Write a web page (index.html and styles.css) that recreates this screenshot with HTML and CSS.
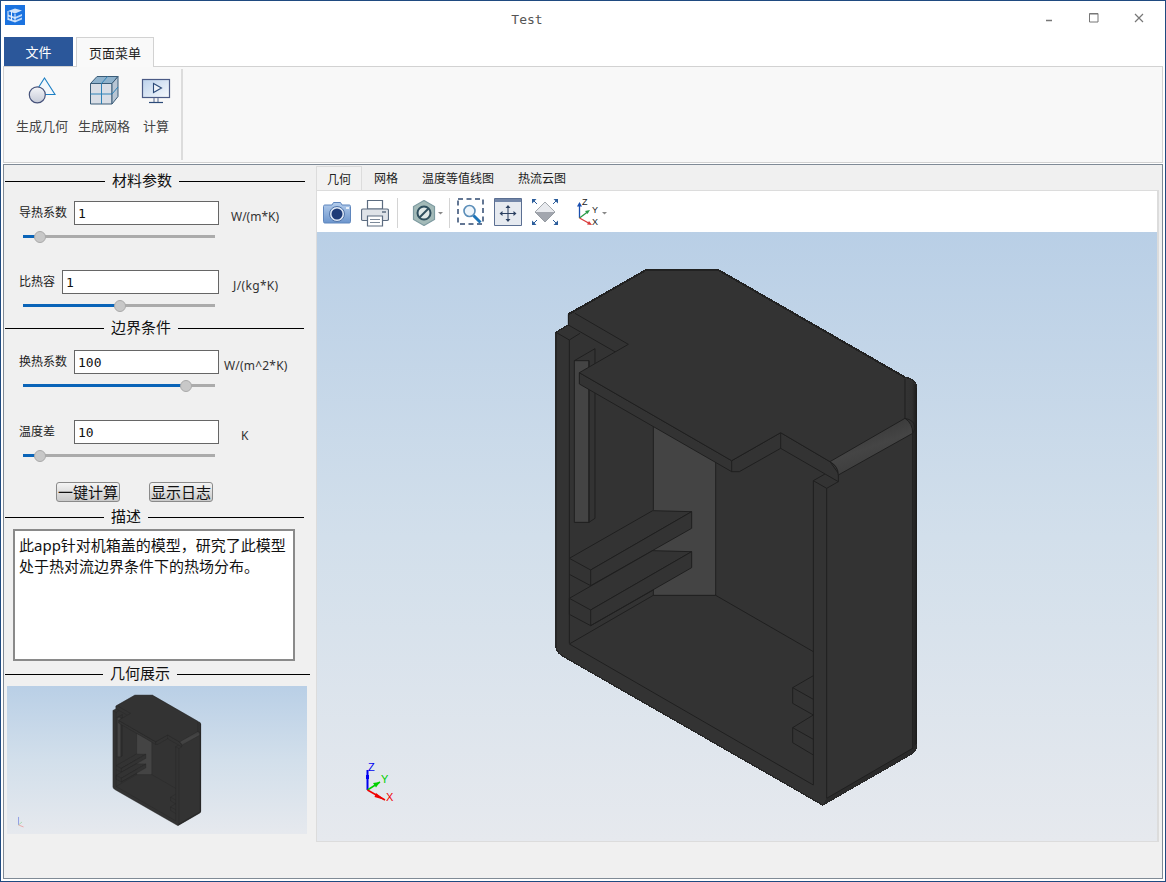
FILE: index.html
```html
<!DOCTYPE html>
<html lang="zh">
<head>
<meta charset="utf-8">
<title>Test</title>
<link rel="stylesheet" href="styles.css">
</head>
<body>
<div class="window">
  <header class="titlebar">
    <svg class="app-icon" viewBox="0 0 20 20">
      <rect width="20" height="20" fill="#1b73e0"/>
      <path d="M3 6 10 3.500 17 5.500l-7 3z" fill="#cfe3fb"/>
      <path d="M3 9.500l7 2.500 7-3v2l-7 3-7-2.500zM3 13l7 2.500 7-3v2l-7 3-7-2.500z" fill="#bcd8fa"/>
      <path d="M3 6v9M6.500 6.500v9M10 9v8" stroke="#e9f2fd" stroke-width="1"/>
    </svg>
    <div class="title">Test</div>
    <div class="controls">
      <svg class="ctl ctl-min" viewBox="0 0 10 10"><path d="M2 8.500h6" stroke="#777" stroke-width="1.500"/></svg>
      <svg class="ctl ctl-max" viewBox="0 0 10 10"><path d="M.5.500h8.500v8.500H.5z" fill="none" stroke="#777"/><path d="M.5 1h8.500" stroke="#777"/></svg>
      <svg class="ctl ctl-close" viewBox="0 0 10 10"><path d="M1 1l8 8M9 1 1 9" stroke="#777" stroke-width="1.200"/></svg>
    </div>
  </header>

  <nav class="ribbon-tabs">
    <div class="rtab-file">文件</div>
    <div class="rtab-page">页面菜单</div>
  </nav>

  <section class="ribbon">
    <div class="ribbon-group">
      <div class="ribbon-item item-geo">
        <svg class="ribbon-icon" viewBox="22 74 40 32">
          <defs>
            <linearGradient id="gCircle" x1="0" y1="0" x2="0" y2="1"><stop offset="0" stop-color="#f4f5f8"/><stop offset="1" stop-color="#c6cbd8"/></linearGradient>
            <linearGradient id="gScreen" x1="0" y1="0" x2="1" y2="1"><stop offset="0" stop-color="#bcd2ec"/><stop offset="1" stop-color="#f6f9fc"/></linearGradient>
          </defs>
          <path d="M44.500 78 55 94.500H34z" fill="#f3f7fb" stroke="#1c7fc4" stroke-width="1.100"/>
          <circle cx="37.300" cy="94.800" r="8" fill="url(#gCircle)" stroke="#46527a" stroke-width="1.200"/>
        </svg>
        <span>生成几何</span>
      </div>
      <div class="ribbon-item item-mesh">
        <svg class="ribbon-icon" viewBox="84 74 40 32">
          <path d="M90.500 83.500 97 76.500h21l-6 7z" fill="#8fb2cc" stroke="#3a5c78"/>
          <path d="M90.500 83.500h21.500v20.500H90.500z" fill="#d9dee6" stroke="#3a5c78"/>
          <path d="M90.500 94h21.500" stroke="#2f83b8"/>
          <path d="M101.500 83.500V104" stroke="#2f83b8"/>
          <path d="M112 83.500l6-7v20l-6 7.500z" fill="#b8c6d4" stroke="#3a5c78"/>
          <path d="M112 94l6-7M101.500 83.500l6-7" stroke="#2f83b8" fill="none"/>
        </svg>
        <span>生成网格</span>
      </div>
      <div class="ribbon-item item-calc">
        <svg class="ribbon-icon" viewBox="136 74 40 32">
          <rect x="142.500" y="79.500" width="27" height="18" fill="url(#gScreen)" stroke="#4a5a85" stroke-width="1.200"/>
          <path d="M153.500 83.500v9l8-4.500z" fill="#eef3f9" stroke="#2b4a78" stroke-width="1.100"/>
          <path d="M154 98v4" stroke="#8d99b0" stroke-width="1.500"/><path d="M158 98v4" stroke="#8d99b0" stroke-width="1.500"/>
          <path d="M149 102.500h14" stroke="#2b4a78" stroke-width="1.200"/>
        </svg>
        <span>计算</span>
      </div>
    </div>
  </section>

  <main class="workspace">
    <aside class="side">
      <div class="heading h-a"><i class="rule rule-a"></i><b>材料参数</b><i class="rule"></i></div>
      <div class="field f-first">
        <label class="lbl lbl-wide">导热系数</label>
        <div class="input input-wide">1</div>
        <span class="unit u-1">W/(m*K)</span>
      </div>
      <div class="slider"><div class="fill" style="width:17px"></div><div class="thumb" style="left:17px"></div></div>
      <div class="field f-gap">
        <label class="lbl lbl-narrow">比热容</label>
        <div class="input input-full">1</div>
        <span class="unit u-2">J/(kg*K)</span>
      </div>
      <div class="slider"><div class="fill" style="width:97px"></div><div class="thumb" style="left:97px"></div></div>
      <div class="heading h-b"><i class="rule rule-b"></i><b>边界条件</b><i class="rule"></i></div>
      <div class="field f-third">
        <label class="lbl lbl-wide">换热系数</label>
        <div class="input input-wide">100</div>
        <span class="unit u-3">W/(m^2*K)</span>
      </div>
      <div class="slider"><div class="fill" style="width:163px"></div><div class="thumb" style="left:163px"></div></div>
      <div class="field f-gap-b">
        <label class="lbl lbl-wide">温度差</label>
        <div class="input input-wide">10</div>
        <span class="unit u-4">K</span>
      </div>
      <div class="slider"><div class="fill" style="width:17px"></div><div class="thumb" style="left:17px"></div></div>
      <div class="actions">
        <button class="btn">一键计算</button>
        <button class="btn">显示日志</button>
      </div>
      <div class="heading h-c"><i class="rule rule-b"></i><b>描述</b><i class="rule"></i></div>
      <div class="desc">此app针对机箱盖的模型，研究了此模型<br>处于热对流边界条件下的热场分布。</div>
      <div class="heading h-d"><i class="rule rule-d"></i><b>几何展示</b><i class="rule"></i></div>
      <div class="thumb-view">
        <svg class="thumb-svg" viewBox="122 232 1230 607" width="300" height="148">
          <use href="#model"/>
          <g transform="translate(122 232) scale(4.100)" fill="none" stroke-width=".7">
            <path d="M11.500 139v-8" stroke="#6f7fe0"/>
            <path d="M11.500 139l3.500-3" stroke="#8fd49a"/>
            <path d="M11.500 139l5 2" stroke="#ee8f8f"/>
          </g>
        </svg>
      </div>
    </aside>

    <div class="content">
      <div class="tabs">
        <div class="tab active">几何</div>
        <div class="tab">网格</div>
        <div class="tab">温度等值线图</div>
        <div class="tab">热流云图</div>
      </div>
      <div class="pane">
        <div class="toolbar">
          <svg class="tool t-cam" viewBox="0 0 28 22" width="28" height="22">
            <defs><linearGradient id="gCam" x1="0" y1="0" x2="0" y2="1"><stop offset="0" stop-color="#b4cdec"/><stop offset="1" stop-color="#6c95cd"/></linearGradient></defs>
            <path d="M9 3l1.500-2.500h7L19 3h7c1 0 1.500.5 1.500 1.500v15c0 1-.5 1.500-1.500 1.500H2c-1 0-1.500-.5-1.500-1.500v-15C.5 3.500 1 3 2 3z" fill="url(#gCam)" stroke="#5f86bd"/>
            <circle cx="14" cy="12" r="7.500" fill="#dfe9f6" stroke="#4f73a8"/>
            <circle cx="14" cy="12" r="5.500" fill="#1f3c78"/>
            <rect x="23" y="5" width="3" height="2" fill="#e8f0fa"/>
          </svg>
          <svg class="tool t-print" viewBox="0 0 28 28" width="28" height="28">
            <path d="M6.500 10V1.500h15V10z" fill="#fff" stroke="#5c6c80" stroke-width="1.200"/>
            <path d="M2 10h24c1 0 1.500.5 1.500 1.500V20c0 1-.5 1.500-1.500 1.500H2C1 21.500.5 21 .5 20v-8.500C.5 10.500 1 10 2 10z" fill="#dfe3e8" stroke="#5c6c80" stroke-width="1.200"/>
            <path d="M6.500 17h15v10h-15z" fill="#fff" stroke="#5c6c80" stroke-width="1.200"/>
            <path d="M9 20.500h10M9 23.500h10" stroke="#7d8a9a"/>
            <path d="M21 13h4" stroke="#5c6c80" stroke-width="1.500"/>
          </svg>
          <i class="sep sep-a"></i>
          <svg class="tool t-hex" viewBox="0 0 32 26" width="32" height="26">
            <path d="M12 .5l10.500 6v13l-10.500 6-10.500-6v-13z" fill="#a3bab8" stroke="#7d9aa0" stroke-width="1.200"/>
            <circle cx="12" cy="13" r="6.500" fill="#dfe8e8" stroke="#2f4f5e" stroke-width="2"/>
            <path d="M7.500 17.500l9-9" stroke="#2f4f5e" stroke-width="2"/>
            <path d="M26 12h5l-2.500 2.500z" fill="#888"/>
          </svg>
          <i class="sep sep-b"></i>
          <svg class="tool t-zoom" viewBox="0 0 27 28" width="27" height="28">
            <path d="M1 1h25v25H1z" fill="none" stroke="#2f4a70" stroke-width="1.500" stroke-dasharray="5 3.500"/>
            <circle cx="12.500" cy="13" r="5.500" fill="#eef5fb" stroke="#5a8db8" stroke-width="1.600"/>
            <path d="M16.500 17.500l7 7" stroke="#1d74b8" stroke-width="3"/>
          </svg>
          <svg class="tool t-fit" viewBox="0 0 28 28" width="28" height="28">
            <path d="M.5.500h27v27H.5z" fill="#e6eaf0" stroke="#5b6f92"/>
            <path d="M1 1h26v3H1z" fill="#7286a8"/>
            <path d="M14 8v15M6.500 15.500h15" stroke="#2a3f60"/>
            <path d="M14 7l-2.500 3h5zM14 24l-2.500-3h5zM5.500 15.500l3-2.500v5zM22.500 15.500l-3-2.500v5z" fill="#2a3f60"/>
          </svg>
          <svg class="tool t-dia" viewBox="0 0 28 28" width="28" height="28">
            <path d="M14 4 24 14 14 24 4 14z" fill="#e8eaee"/>
            <path d="M4 14h20L14 24z" fill="#a2a6ae"/>
            <path d="M14 4 24 14 14 24 4 14z" fill="none" stroke="#80868e" stroke-width=".7"/>
            <path d="M1 1h4.500L1 5.500zM27 1h-4.500L27 5.500zM1 27h4.500L1 22.500zM27 27h-4.500L27 22.500z" fill="#2b5d9b"/>
            <path d="M3 3l3 3M25 3l-3 3M3 25l3-3M25 25l-3-3" stroke="#2b5d9b"/>
          </svg>
          <svg class="tool t-axes" viewBox="0 0 32 28" width="32" height="28">
            <path d="M2.500 20V7" stroke="#1b4fb0" stroke-width="1.300"/><path d="M2.500 4 0 8.500h5z" fill="#1b4fb0"/>
            <path d="M2.500 20l8-6" stroke="#2a9a48" stroke-width="1.300"/><path d="M13 12l-5 1 2.500 3z" fill="#2a9a48"/>
            <path d="M2.500 20l9 5" stroke="#d93a3a" stroke-width="1.300"/><path d="M15 27l-5-.5 2-3.500z" fill="#d93a3a"/>
            <text x="5" y="7" class="axis-t">Z</text>
            <text x="15" y="15" class="axis-t">Y</text>
            <text x="15" y="27" class="axis-t">X</text>
            <path d="M25 14h5l-2.500 2.500z" fill="#888"/>
          </svg>
        </div>
        <div class="canvas">
          <svg class="canvas-svg" viewBox="317 232 840 609" width="840" height="609">
            <defs>
              <linearGradient id="gRod" x1="0" y1="0" x2=".5" y2="1"><stop offset="0" stop-color="#2e2e2e"/><stop offset=".6" stop-color="#454545"/><stop offset="1" stop-color="#3a3a3a"/></linearGradient>
              <linearGradient id="gEdge" x1="0" y1="0" x2="1" y2="0"><stop offset="0" stop-color="#343434"/><stop offset=".6" stop-color="#303030"/><stop offset="1" stop-color="#1c1c1c"/></linearGradient>
              <g id="model" transform="translate(540 260) scale(.33333)" stroke-linejoin="round">
                <path d="M48 217 85 195V163L318 30H535L1095 352Q1130 358 1130 385V1450Q1130 1470 1118 1480L848 1635 80 1195Q48 1180 48 1160Z" fill="#333" stroke="#262626" stroke-width="4"/>
                <path d="M1095 356Q1125 360 1130 385V1450Q1130 1470 1118 1468V520L1095 475Z" fill="url(#gEdge)"/>
                <path d="M1118 1465 860 1615 848 1635 1118 1480Q1130 1470 1130 1450V1450Z" fill="#2a2a2a"/>
                <path d="M340 497 527 605V1006H340Z" fill="#444"/>
                <path d="M103 302 165 266V775L147 787H103Z" fill="#333"/>
                <path d="M103 302H147V787H103Z" fill="#444"/>
                <g fill="none" stroke="#1f1f1f" stroke-width="3">
                  <path d="M48 217 88 240 120 220M88 240V1150M85 163V195L228 277"/>
                  <path d="M103 302H147V787H103ZM103 302 165 266V775L147 787M147 302V787"/>
                  <path d="M340 497V750M527 605V1006M340 1006H527L820 1175M340 990V1006M88 1152 340 1006M88 1152 820 1575"/>
                  <path d="M820 662V1575M860 685V1615L1118 1465V520M820 662 860 685 895 665M820 662 855 642"/>
                  <path d="M820 1247 758 1283V1330L820 1365 758 1403V1448L820 1485M758 1283 820 1318M758 1403 820 1438"/>
                  <path d="M88 943 152 977M88 1015V1063L152 1097"/>
                </g>
                <path d="M88 895 338 752 455 755 152 930Z" fill="#333" stroke="#1f1f1f" stroke-width="3"/>
                <path d="M152 930 455 755V805L152 977Z" fill="#333" stroke="#1f1f1f" stroke-width="3"/>
                <path d="M88 1015 338 872 455 875 152 1050Z" fill="#333" stroke="#1f1f1f" stroke-width="3"/>
                <path d="M152 1050 455 875V923L152 1097Z" fill="#333" stroke="#1f1f1f" stroke-width="3"/>
                <path d="M152 1097 340 990" fill="none" stroke="#1f1f1f" stroke-width="3"/>
                <path d="M118 338V372L575 635H598L722 565 895 665V640L870 605 722 518 575 602Z" fill="#333" stroke="#1f1f1f" stroke-width="3"/>
                <path d="M575 602V635M722 518V565" stroke="#1f1f1f" stroke-width="3" fill="none"/>
                <path d="M105 160 330 33H535L1095 355V475L870 605 722 518 575 602 118 338 265 253Z" fill="#333"/>
                <path d="M105 160 265 253 118 338 575 602 722 518 870 605Q895 618 895 640" fill="none" stroke="#1f1f1f" stroke-width="3"/>
                <path d="M870 605 1095 475Q1118 490 1118 520L895 645Q895 618 870 605Z" fill="url(#gRod)" stroke="#1f1f1f" stroke-width="3"/>
                <path d="M1095 475Q1125 480 1125 505 1122 515 1118 520M1095 356V475" fill="none" stroke="#1f1f1f" stroke-width="3"/>
                <path d="M318 30H535L1095 352" fill="none" stroke="#222" stroke-width="6"/>
                <path d="M85 163 318 30" fill="none" stroke="#222" stroke-width="6"/>
              </g>
            </defs>
            <use href="#model"/>
            <g class="triad">
              <path d="M367.500 790V770" stroke="#0000f0" stroke-width="2"/>
              <rect x="366" y="775" width="3" height="4" fill="#0000f0"/>
              <path d="M367.500 790 380 782" stroke="#00d000" stroke-width="1.500"/>
              <path d="M380 782 373 783 376 787.500z" fill="#00d000"/>
              <path d="M367.500 790 385 800" stroke="#f00000" stroke-width="1.500"/>
              <path d="M385 800 376 793 374.500 797z" fill="#f00000"/>
              <text x="368" y="771" class="t-z">Z</text>
              <text x="381" y="783" class="t-y">Y</text>
              <text x="386" y="801" class="t-x">X</text>
            </g>
          </svg>
        </div>
      </div>
    </div>
  </main>
</div>
</body>
</html>
```

FILE: styles.css
```css
* { box-sizing: border-box; }
html, body { margin: 0; padding: 0; }
body {
  width: 1166px;
  height: 882px;
  overflow: hidden;
  font-family: "Noto Sans", "Noto Sans CJK SC", sans-serif;
  color: #222;
}
.window {
  width: 1166px;
  height: 882px;
  background: #fff;
  border: 1px solid #1f4a80;
  display: flex;
  flex-direction: column;
}

/* title bar */
.titlebar {
  height: 36px;
  flex: none;
  display: flex;
  align-items: flex-start;
}
.app-icon { width: 20px; height: 20px; margin: 4px 0 0 4px; flex: none; }
.title {
  width: 40px;
  margin: 10px 0 0 482px;
  font: 13px/18px "DejaVu Sans Mono", monospace;
  color: #555;
  text-align: center;
}
.controls { margin-left: auto; display: flex; }
.ctl { width: 10px; height: 10px; display: block; flex: none; }
.ctl-min { margin: 11px 0 0 0; }
.ctl-max { margin: 12px 0 0 35px; }
.ctl-close { margin: 12px 21px 0 35px; }

/* ribbon */
.ribbon-tabs { height: 30px; flex: none; display: flex; align-items: flex-start; padding-left: 3px; position: relative; z-index: 1; }
.rtab-file {
  width: 69px; height: 29px;
  background: #2b579a; color: #fff;
  font: 13px/29px "Noto Sans CJK SC", sans-serif;
  text-align: center;
}
.rtab-page {
  width: 78px; height: 30px; margin-left: 3px;
  background: #f9f9f9;
  border: 1px solid #d2d2d2; border-bottom: 0;
  font: 13px/29px "Noto Sans CJK SC", sans-serif;
  text-align: center;
  color: #222;
}
.ribbon {
  height: 97px;
  margin: -1px 2px 0 2px;
  flex: none;
  background: #f8f8f8;
  border: 1px solid #d2d2d2;
  padding: 2px 0;
}
.ribbon-group {
  width: 179px; height: 91px;
  border-right: 2px solid #dcdcdc;
  display: flex;
  padding-left: 12px;
}
.ribbon-item {
  display: flex; flex-direction: column; align-items: center;
  font: 13px/18px "Noto Sans CJK SC", sans-serif;
  color: #444;
}
.ribbon-item span { margin-top: 11px; }
.ribbon-icon { width: 40px; height: 32px; flex: none; margin-top: 5px; }
.item-geo { width: 52px; }
.item-mesh { width: 52px; margin-left: 10px; }
.item-calc { width: 26px; margin-left: 13px; }

/* workspace */
.workspace {
  height: 715px;
  margin: 1px 2px 0 2px;
  flex: none;
  background: #f0f0f0;
  border: 1px solid #7f8a96;
  display: flex;
}
.side { width: 312px; flex: none; display: flex; flex-direction: column; padding-top: 6px; }
.heading {
  height: 20px; flex: none;
  display: flex; align-items: center;
  margin-left: 1px;
  color: #111;
}
.heading b { font: 400 15px/20px "Noto Sans CJK SC", sans-serif; margin: -2px 7px 0; }
.rule { display: block; height: 1px; background: #000; flex: 1; }
.rule-a { flex: none; width: 100px; }
.rule-b { flex: none; width: 99px; }
.rule-d { flex: none; width: 98px; }
.h-a { width: 300px; }
.h-b { width: 299px; margin-top: 6px; }
.h-c { width: 299px; margin-top: 5px; }
.h-d { width: 305px; margin-top: 3px; }

.field { display: flex; align-items: center; height: 24px; flex: none; padding-left: 15px; }
.f-first { margin-top: 10px; }
.f-gap { margin-top: 27px; }
.f-third { margin-top: 12px; }
.f-gap-b { margin-top: 28px; }
.lbl { font: 12px/16px "Noto Sans CJK SC", sans-serif; color: #222; flex: none; margin-top: -2px; }
.lbl-wide { width: 55px; }
.lbl-narrow { width: 43px; }
.input {
  height: 24px; flex: none;
  background: #fff;
  border: 1px solid #666;
  padding-left: 3px;
  font: 13px/23px "DejaVu Sans Mono", monospace;
  color: #111;
}
.input-wide { width: 145px; }
.input-full { width: 157px; }
.unit { font: 12px/16px "Noto Sans", sans-serif; color: #333; margin-top: 7px; flex: none; }
.u-1 { margin-left: 12px; }
.u-2 { margin-left: 14px; letter-spacing: .35px; }
.u-3 { margin-left: 5px; letter-spacing: .2px; }
.u-4 { margin-left: 22px; }

.slider {
  position: relative;
  height: 3px; width: 192px; flex: none;
  margin: 10px 0 5px 19px;
  background: #ababab;
}
.fill { height: 3px; background: #0a64b8; }
.thumb {
  position: absolute; top: -4.500px;
  width: 12px; height: 12px; margin-left: -6px;
  border-radius: 50%;
  background: #c8c8c8;
  border: 1px solid #aaa;
}

.actions { display: flex; flex: none; margin: 20px 0 0 52px; }
.btn {
  width: 64px; height: 20px; padding: 0 0 2px;
  margin-right: 29px;
  background: linear-gradient(#f4f4f4, #c9c9c9);
  border: 1px solid #8a8a8a;
  border-radius: 3px;
  font: 15px/17px "Noto Sans CJK SC", sans-serif;
  color: #111;
  white-space: nowrap;
}
.desc {
  width: 282px; height: 132px; flex: none;
  margin: 2px 0 0 9px;
  background: #fff;
  border: 2px solid #8a8a8a;
  padding: 4px 4px;
  font: 15px/21px "Noto Sans", "Noto Sans CJK SC", sans-serif;
  color: #111;
  white-space: nowrap;
}
.thumb-view {
  width: 300px; height: 148px; flex: none;
  margin: 2px 0 0 3px;
  background: linear-gradient(#b9cfe6, #d2dfeb 50%, #e6e9ee);
}
.thumb-svg { display: block; }

/* right */
.content { width: 843px; flex: none; display: flex; flex-direction: column; }
.tabs { height: 25px; flex: none; display: flex; position: relative; top: 1px; }
.tab {
  height: 24px;
  padding: 0 12px;
  font: 12px/24px "Noto Sans CJK SC", sans-serif;
  color: #222;
}
.tab.active { padding: 0 10px; border: 1px solid #dcdcdc; border-bottom: 0; background: #f2f2f2; line-height: 23px; }
.pane {
  width: 843px; height: 652px; flex: none;
  background: #fff;
  border: 1px solid #dcdcdc;
  border-right-width: 2px;
  border-bottom-width: 2px;
}
.toolbar {
  height: 41px;
  display: grid;
  grid-template-columns: 28px 38px 9px 38px 14px 34px 37px 37px 36px;
  padding: 7px 0 0 6px;
  align-items: start;
}
.tool { display: block; }
.t-cam { margin-top: 4px; }
.t-print { margin: 1px 0 0 10px; }
.sep { display: block; width: 1px; height: 30px; background: #d4d4d4; }
.sep-a { margin-left: 8px; }
.t-hex { margin: 2px 0 0 14px; }
.sep-b { margin-left: 13px; }
.t-zoom { margin-left: 7px; }
.t-fit { margin-left: 10px; }
.t-dia { margin-left: 10px; }
.t-axes { margin-left: 19px; }
.axis-t { font: 9px "Liberation Sans", sans-serif; fill: #222; }
.canvas {
  width: 840px; height: 609px;
  background: linear-gradient(#b9cfe6, #d2dfeb 50%, #e6e9ee);
}
.canvas-svg { display: block; shape-rendering: crispEdges; }
.triad { shape-rendering: auto; }
.triad text { font: 11px "Liberation Sans", sans-serif; }
.t-z { fill: #0000f0; }
.t-y { fill: #00d000; }
.t-x { fill: #f00000; }
```
